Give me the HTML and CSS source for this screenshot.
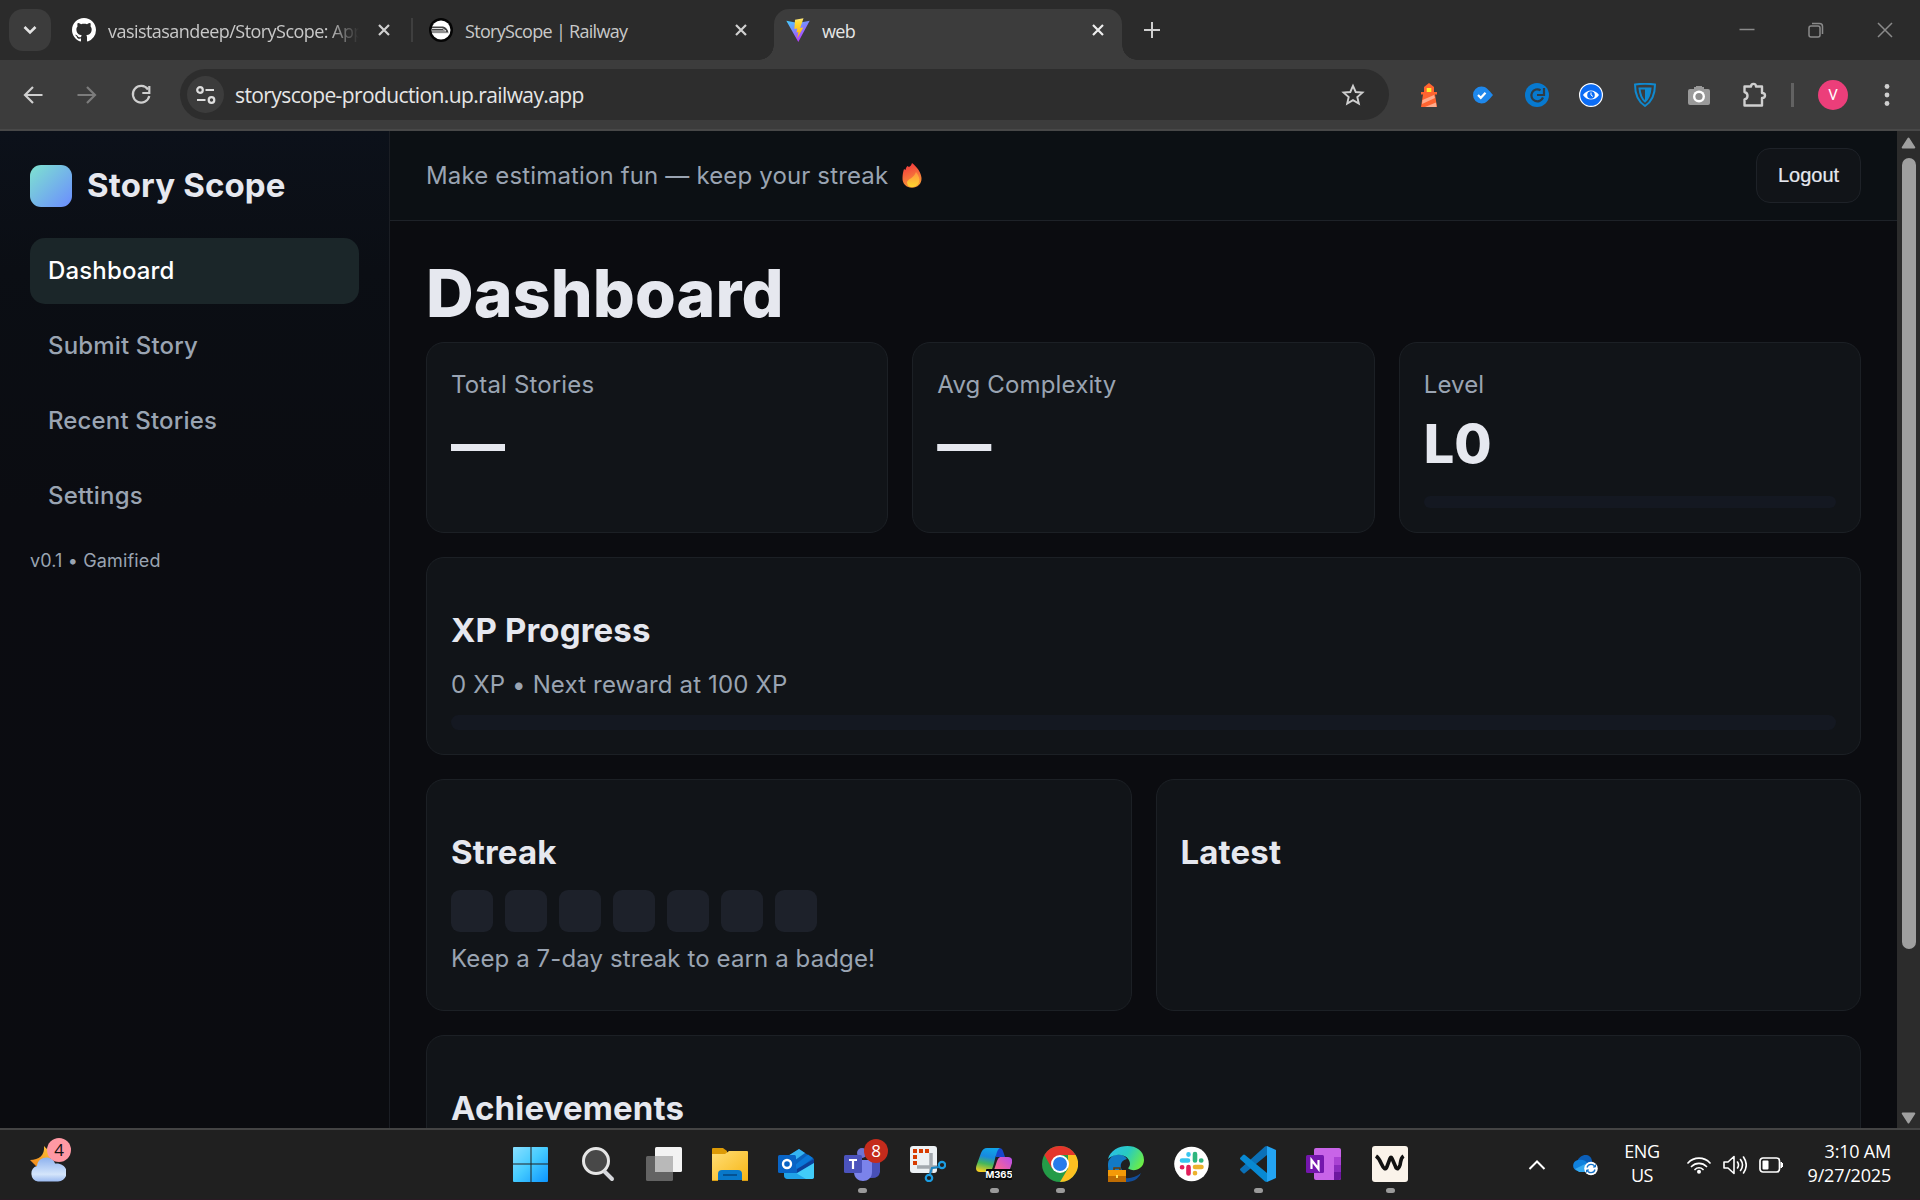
FILE: index.html
```html
<!DOCTYPE html>
<html lang="en">
<head>
<meta charset="utf-8">
<title>web</title>
<link rel="stylesheet" href="styles.css">
</head>
<body>
<div class="tabstrip">
  <div class="tab-search"><svg width="14" height="10" viewBox="0 0 14 10"><path d="M1.5 2l5.500 5.500L12.500 2" fill="none" stroke="#e3e3e3" stroke-width="2.600"/></svg></div>
  <div class="tab tab-one">
    <svg class="favicon" width="24" height="24" viewBox="0 0 16 16"><path fill="#fff" d="M8 0C3.580 0 0 3.580 0 8c0 3.540 2.290 6.530 5.470 7.590.4.070.55-.17.55-.38 0-.19-.01-.82-.01-1.490-2.010.37-2.530-.49-2.690-.94-.09-.23-.48-.94-.82-1.130-.28-.15-.68-.52-.01-.53.63-.01 1.080.58 1.230.82.72 1.210 1.870.87 2.330.66.07-.52.28-.87.51-1.070-1.780-.2-3.640-.89-3.640-3.950 0-.87.31-1.590.82-2.150-.08-.2-.36-1.020.08-2.120 0 0 .67-.21 2.200.82.64-.18 1.320-.27 2-.27s1.360.09 2 .27c1.530-1.040 2.200-.82 2.200-.82.44 1.100.16 1.920.08 2.120.51.56.82 1.270.82 2.150 0 3.070-1.870 3.750-3.650 3.950.29.25.54.73.54 1.480 0 1.070-.01 1.930-.01 2.200 0 .21.15.46.55.38A8.010 8.010 0 0016 8c0-4.420-3.580-8-8-8z"/></svg>
    <span class="tab-title faded">vasistasandeep/StoryScope: App</span>
    <svg class="close" width="12" height="12" viewBox="0 0 12 12"><path d="M1 1l10 10M11 1L1 11" stroke="#d0d0d0" stroke-width="2.200"/></svg>
  </div>
  <div class="tab-sep"></div>
  <div class="tab tab-two">
    <svg class="favicon" width="24" height="24" viewBox="0 0 24 24"><circle cx="12" cy="12" r="12" fill="#050505"/><circle cx="12" cy="12" r="9.500" fill="#fff"/><path d="M3 8.500h11c3 .5 5 3 5.500 6.500H2.800z" fill="#444"/><path d="M3 10.500h10.500l3.500 2.500H3M3 15h17" stroke="#ddd" stroke-width="1" fill="none"/></svg>
    <span class="tab-title">StoryScope | Railway</span>
    <svg class="close" width="12" height="12" viewBox="0 0 12 12"><path d="M1 1l10 10M11 1L1 11" stroke="#d0d0d0" stroke-width="2.200"/></svg>
  </div>
  <div class="tab tab-active">
    <svg class="favicon" width="24" height="24" viewBox="0 0 24 24"><defs><linearGradient id="va" x1="0" y1="0" x2=".6" y2="1"><stop offset="0" stop-color="#41d1ff"/><stop offset="1" stop-color="#bd34fe"/></linearGradient><linearGradient id="vb" x1="0" y1="0" x2="0" y2="1"><stop offset="0" stop-color="#ffea83"/><stop offset=".2" stop-color="#ffdd35"/><stop offset="1" stop-color="#ffa800"/></linearGradient></defs><path d="M.3 2.800L12 5l11.700-2.200L12.300 24z" fill="url(#va)"/><path d="M17.500.200L9 1.800 8.400 11l2.900-.6-.8 4.200 2-.6-1.300 6.500 6.100-11-3.100.6z" fill="url(#vb)"/></svg>
    <span class="tab-title">web</span>
    <svg class="close" width="12" height="12" viewBox="0 0 12 12"><path d="M1 1l10 10M11 1L1 11" stroke="#eee" stroke-width="2.200"/></svg>
  </div>
  <svg class="new-tab" width="16" height="16" viewBox="0 0 16 16"><path d="M8 0v16M0 8h16" stroke="#d0d0d0" stroke-width="2"/></svg>
  <div class="window-controls">
    <svg width="16" height="16" viewBox="0 0 16 16"><path d="M.5 7.500h15" stroke="#8a8a8a" stroke-width="1.500"/></svg>
    <svg width="16" height="16" viewBox="0 0 16 16"><rect x="1" y="4" width="11" height="11" rx="2" fill="none" stroke="#8a8a8a" stroke-width="1.500"/><path d="M4 1.500h7.500a3 3 0 013 3V12" fill="none" stroke="#8a8a8a" stroke-width="1.500"/></svg>
    <svg width="16" height="16" viewBox="0 0 16 16"><path d="M1 1l14 14M15 1L1 15" stroke="#8a8a8a" stroke-width="1.500"/></svg>
  </div>
</div>

<div class="toolbar">
  <div class="nav-buttons">
    <svg width="24" height="24" viewBox="0 0 24 24"><path d="M12 4l-8 8 8 8M4 12h17.500" fill="none" stroke="#cfcfcf" stroke-width="2.200"/></svg>
    <svg width="24" height="24" viewBox="0 0 24 24"><path d="M12 4l8 8-8 8M20 12H2.500" fill="none" stroke="#7c7c7c" stroke-width="2.200"/></svg>
    <svg width="24" height="24" viewBox="0 0 24 24"><path d="M19 6.500A8.300 8.300 0 1 0 20.300 13" fill="none" stroke="#cfcfcf" stroke-width="2.200"/><path d="M20.300 3v7h-7" fill="none" stroke="#cfcfcf" stroke-width="2.200"/></svg>
  </div>
  <div class="omnibox">
    <div class="site-info"><svg width="20" height="18" viewBox="0 0 20 18"><g fill="none" stroke="#dedede" stroke-width="2.200"><circle cx="4" cy="4" r="2.800"/><path d="M9.500 4H18M1 14h8.500"/><circle cx="15.500" cy="14" r="2.800"/></g></svg></div>
    <span class="url">storyscope-production.up.railway.app</span>
    <svg class="star" width="24" height="24" viewBox="0 0 24 24"><path d="M12 2.800l2.700 6.200 6.700.6-5.100 4.400 1.500 6.600L12 17.100l-5.800 3.500L7.700 14 2.600 9.600l6.700-.6z" fill="none" stroke="#cfcfcf" stroke-width="1.900"/></svg>
  </div>
  <div class="extensions">
    <svg width="24" height="24" viewBox="0 0 24 24"><path d="M12 0l5 4v5h3v2.500h-2L20 24H4l2-12.500H4V9h3V4z" fill="#ff6430"/><path d="M5.500 17L17 12l1 3-13 6zM8 24l11-4.500.5 4.500z" fill="#ffab8c"/><rect x="9.700" y="5" width="4.600" height="4" fill="#ffee2e"/></svg>
    <svg width="24" height="24" viewBox="0 0 24 24"><path d="M10.500 3.500c5 0 6.500 3 11.500 8.500-5 5.500-6.500 8.500-11.500 8.500a8.500 8.500 0 010-17z" fill="#1e88ec"/><path d="M7 12l2.800 2.800 4.700-5" fill="none" stroke="#fff" stroke-width="2.200"/></svg>
    <svg width="24" height="24" viewBox="0 0 24 24"><circle cx="12" cy="12" r="12" fill="#0779cf"/><path d="M19 5v7h-7M15.500 7.200a6 6 0 102.500 7.300" fill="none" stroke="#303b44" stroke-width="2.200"/></svg>
    <svg width="24" height="24" viewBox="0 0 24 24"><circle cx="12" cy="12" r="11.400" fill="#0b6cf5" stroke="#fff" stroke-width="1.200"/><path d="M4 12c4-6 12-6 16 0-4 6-12 6-16 0z" fill="#fff"/><circle cx="12" cy="12" r="3.800" fill="#0b6cf5"/><path d="M12 9.500V12l2 1.500" fill="none" stroke="#fff" stroke-width="1"/></svg>
    <svg width="24" height="24" viewBox="0 0 24 24"><path d="M2 1.500q10-1.500 20 0c0 9-3 17-10 21.500C5 18.500 2 10.500 2 1.500z" fill="none" stroke="#1089cf" stroke-width="2"/><path d="M6.500 5.500h11C17 11 15.500 15.500 12 18.500 8.500 15.500 7 11 6.500 5.500z" fill="none" stroke="#1089cf" stroke-width="2"/><path d="M12 5.500h5.500C17 11 15.500 15.500 12 18.500z" fill="#1089cf"/></svg>
    <svg width="24" height="24" viewBox="0 0 24 24"><path d="M3 6h4V4h2V3h6v1h2v2h4q2 0 2 2v12q0 2-2 2H3q-2 0-2-2V8q0-2 2-2z" fill="#9a9a9a"/><circle cx="12" cy="13.500" r="6" fill="#fff"/><circle cx="12" cy="13.500" r="3.600" fill="#8d8d8d"/></svg>
    <svg width="26" height="26" viewBox="0 0 26 26"><path d="M3.500 4.500h6.500C10 1 15 1 15 4.500h6v6.500c4 0 4 5 0 5v7.500H3.500v-6c4-1 4-6.500 0-7.500z" fill="none" stroke="#cfcfcf" stroke-width="2.400" stroke-linejoin="round"/></svg>
  </div>
  <div class="toolbar-sep"></div>
  <div class="avatar">V</div>
  <svg class="menu" width="6" height="28" viewBox="0 0 6 28"><g fill="#cfcfcf"><circle cx="3" cy="5.500" r="2.400"/><circle cx="3" cy="14" r="2.400"/><circle cx="3" cy="22.500" r="2.400"/></g></svg>
</div>

<div class="viewport">
  <aside class="sidebar">
    <div class="brand"><div class="logo"></div><span>Story Scope</span></div>
    <nav class="nav">
      <a class="nav-item active">Dashboard</a>
      <a class="nav-item">Submit Story</a>
      <a class="nav-item">Recent Stories</a>
      <a class="nav-item">Settings</a>
    </nav>
    <div class="version">v0.1 • Gamified</div>
  </aside>
  <main class="main">
    <header class="topbar">
      <div class="tagline">Make estimation fun — keep your streak
        <svg width="20" height="25" viewBox="0 0 20 25"><defs><linearGradient id="fl" x1=".3" y1="0" x2=".6" y2="1"><stop offset="0" stop-color="#f4363d"/><stop offset=".55" stop-color="#f5713b"/><stop offset="1" stop-color="#f99a35"/></linearGradient><linearGradient id="fi" x1="0" y1="0" x2="0" y2="1"><stop offset="0" stop-color="#ff9440"/><stop offset="1" stop-color="#ffd52e"/></linearGradient></defs><path d="M10 0c5 4 9 9 9.500 15 .3 6-4 9.700-9.500 9.700S.3 21 .5 15c.1-3 .5-6 1.500-9l1.500 1c.2-1.500 1-3 2-4L7 4C8.500 3 9.500 2 10 0z" fill="url(#fl)"/><path d="M14 9c3 4 4 7 3 10-1 3.500-4 5-7 5s-5-2-5-5c1-3 7-4 9-10z" fill="url(#fi)"/></svg>
      </div>
      <button class="logout">Logout</button>
    </header>
    <div class="content">
      <h1>Dashboard</h1>
      <div class="cards">
        <section class="card third"><p>Total Stories</p><div class="stat">—</div></section>
        <section class="card third"><p>Avg Complexity</p><div class="stat">—</div></section>
        <section class="card third"><p>Level</p><div class="stat">L0</div><div class="bar"></div></section>
        <section class="card full"><h3>XP Progress</h3><p>0 XP • Next reward at 100 XP</p><div class="bar thick"></div></section>
        <section class="card half"><h3>Streak</h3>
          <div class="days"><i></i><i></i><i></i><i></i><i></i><i></i><i></i></div>
          <p class="hint">Keep a 7-day streak to earn a badge!</p></section>
        <section class="card half"><h3>Latest</h3></section>
        <section class="card full"><h3>Achievements</h3></section>
      </div>
    </div>
  </main>
  <div class="scrollbar">
    <svg width="15" height="12" viewBox="0 0 15 12"><path d="M7.500 1.500l5.800 9H1.700z" fill="#a0a0a0" stroke="#a0a0a0" stroke-width="2" stroke-linejoin="round"/></svg>
    <div class="thumb"></div>
    <svg width="15" height="12" viewBox="0 0 15 12"><path d="M7.500 10.500l5.800-9H1.700z" fill="#a0a0a0" stroke="#a0a0a0" stroke-width="2" stroke-linejoin="round"/></svg>
  </div>
</div>

<div class="taskbar">
  <div class="weather">
    <svg width="36" height="36" viewBox="0 0 36 36"><defs><linearGradient id="mo" x1="0" y1="1" x2="1" y2="0"><stop offset="0" stop-color="#f08418"/><stop offset="1" stop-color="#ffc83c"/></linearGradient><linearGradient id="cl" x1="0" y1="0" x2="0" y2="1"><stop offset="0" stop-color="#8db1ee"/><stop offset=".7" stop-color="#d4e5fb"/><stop offset="1" stop-color="#9bbaf0"/></linearGradient></defs><path d="M14 0c5 5 10 10 4 20H6L0 14c9 0 15-5 14-14z" fill="url(#mo)"/><path d="M8 35.500a8 8 0 01-1-15.500C8 9 23 9 25 17.500c15-1 15 17 3 18z" fill="url(#cl)"/></svg>
    <span class="badge pink">4</span>
  </div>
  <div class="apps">
    <div class="app"><svg width="36" height="36" viewBox="1 0 36 36" overflow="visible"><defs><linearGradient id="wg" gradientUnits="userSpaceOnUse" x1="0" y1="0" x2="35" y2="35"><stop offset="0" stop-color="#8be0ff"/><stop offset=".5" stop-color="#45cbff"/><stop offset="1" stop-color="#0d96ff"/></linearGradient></defs><path fill="url(#wg)" d="M1 1h16.500v16.500H0V2q0-1 1-1zM18.500 1H34q1 0 1 1v15.500H18.500zM0 18.500h17.500V36H1q-1 0-1-1zM18.500 18.500H35V35q0 1-1 1H18.500z"/></svg></div>
    <div class="app"><svg width="36" height="36" viewBox="0 0 36 36"><circle cx="16" cy="15" r="12.500" fill="#484848" stroke="#e6e6e6" stroke-width="3"/><path d="M25 26l7 7" stroke="#d6d8dc" stroke-width="4" stroke-linecap="round"/></svg></div>
    <div class="app"><svg width="36" height="36" viewBox="0 0 36 36"><rect x="9" y="1" width="27" height="25" rx="1.500" fill="#f3f3f3"/><rect x="0" y="10" width="27" height="25" rx="1.500" fill="#636363"/><path d="M9 10h18v16H9z" fill="#b9b9b9"/></svg></div>
    <div class="app"><svg width="36" height="36" viewBox="0 0 36 36"><defs><linearGradient id="fo" x1="0" y1="0" x2="1" y2="1"><stop offset="0" stop-color="#ffde75"/><stop offset="1" stop-color="#f7b616"/></linearGradient></defs><path d="M0 3q0-1 1-1h10l4 3v5H0z" fill="#dc9a06"/><path d="M0 8h13l4-3h18q1 0 1 1v28H0z" fill="url(#fo)"/><path d="M6 34V28q0-4 4-4h16q4 0 4 4v6z" fill="#0878c9"/><path d="M11 29h14" stroke="#054f8c" stroke-width="1.800"/><path d="M0 34.500h6M30 34.500h6" stroke="#d69d16"/></svg></div>
    <div class="app"><svg width="36" height="36" viewBox="0 0 36 36"><path d="M6 13L21 3l15 10v18q0 2-3 2H10q-4 0-4-4z" fill="#0a62bd"/><path d="M8 11L21 3l6 4-14 10z" fill="#35b5f2"/><path d="M17 19L30 8.500l5 3.500L19 24z" fill="#0a78d8"/><path d="M36 13v4L19 27v-4z" fill="#0d3f98"/><path d="M36 17v14q0 2-3 2H9z" fill="#41ccf8"/><path d="M6 27h12l10 6H10q-4 0-4-4z" fill="#20a3e8"/><rect x="0" y="9" width="18" height="18" rx="1.500" fill="#0964c5"/><circle cx="9" cy="18" r="4" fill="none" stroke="#fff" stroke-width="2.400"/></svg></div>
    <div class="app"><svg width="36" height="36" viewBox="0 0 36 36"><circle cx="18" cy="7" r="5" fill="#6d74d4"/><path d="M24 15h12v11q-1 6-8 6h-4z" fill="#4850b8"/><path d="M10 14h18v12c0 12-18 12-18 0z" fill="#7b83eb"/><rect y="9" width="18" height="18" rx="1.500" fill="#4b53bc"/><path d="M5 14h8M9 14v9" stroke="#fff" stroke-width="2.200"/></svg><span class="badge red">8</span><b class="running"></b></div>
    <div class="app"><svg width="36" height="36" viewBox="0 0 36 36"><rect width="27" height="27" rx="3" fill="#edf1f4"/><path d="M5 19V5h14" fill="none" stroke="#d83b01" stroke-width="4" stroke-dasharray="4 2"/><path d="M21 7v20M7 21h20" stroke="#a3a9af" stroke-width="3.500"/><circle cx="32" cy="19" r="3.200" fill="none" stroke="#1b9de2" stroke-width="2.200"/><circle cx="19" cy="32" r="3.200" fill="none" stroke="#1b9de2" stroke-width="2.200"/><path d="M20 28l2-6 7-1" stroke="#1b85c4" stroke-width="2" fill="none"/></svg></div>
    <div class="app"><svg width="36" height="36" viewBox="0 0 36 36"><defs><linearGradient id="ma" x1=".5" y1="0" x2=".3" y2="1"><stop offset="0" stop-color="#11a3e8"/><stop offset=".35" stop-color="#1889df"/><stop offset=".65" stop-color="#45b65b"/><stop offset="1" stop-color="#f7cf20"/></linearGradient><linearGradient id="mb" x1="1" y1="0" x2="0" y2="1"><stop offset="0" stop-color="#b44df0"/><stop offset=".5" stop-color="#f2619d"/><stop offset="1" stop-color="#ffac56"/></linearGradient></defs><path d="M18 2h5q3 0 4 3l2 6h-9z" fill="#1746cd"/><path d="M11 2h13c-5 2-5 20-10 24H4c-4 0-5-3-3-8L5 7q2-5 6-5z" fill="url(#ma)"/><path d="M24 11h8q5 0 4 6l-4 12q-2 5-7 5H12q4-3 5-7l4-12q1-3 3-4z" fill="url(#mb)"/><rect x="10" y="23" width="26" height="11" rx="1" fill="#080808"/><text x="23" y="31.500" text-anchor="middle" class="m365">M365</text></svg><b class="running"></b></div>
    <div class="app"><svg width="36" height="36" viewBox="0 0 36 36"><circle cx="18" cy="18" r="18" fill="#249b48"/><path d="M2.400 9A18 18 0 0133.600 9H18L10 22.500z" fill="#e5352b"/><path d="M33.600 9A18 18 0 0118 36l8-13.500V9z" fill="#fcc021"/><circle cx="18" cy="18" r="9" fill="#fff"/><circle cx="18" cy="18" r="7" fill="#287bea"/></svg><b class="running"></b></div>
    <div class="app"><svg width="36" height="36" viewBox="0 0 36 36"><defs><linearGradient id="ed" x1="0" y1=".2" x2="1" y2=".6"><stop offset="0" stop-color="#2cbfe8"/><stop offset=".5" stop-color="#28cbc0"/><stop offset="1" stop-color="#6ced45"/></linearGradient></defs><path d="M12 30c6 4 15 2 21-3-3 7-9 9-15 9h-6z" fill="#124d98"/><path d="M0 20C-1 8 14 5 19 13c-5 1-7 5-6 9 1 3 3 5 5 6v8C6 36 0 30 0 20z" fill="#127ac5"/><path d="M0 13C4-4 36-5 36 14c0 9-10 12-15 9-2-1 1-2 1-5C22 9 9 5 0 13z" fill="url(#ed)"/><rect y="24" width="18" height="12" fill="#be6c03"/><path d="M0 24h18v6H0z" fill="#f49a08"/><path d="M6 24v-2h6v2" fill="none" stroke="#6b3c05" stroke-width="1.600"/><rect x="8" y="29" width="2" height="3" fill="#ffe45c"/></svg></div>
    <div class="app"><svg width="36" height="36" viewBox="0 0 36 36"><circle cx="17.500" cy="18" r="17.300" fill="#fff"/><g stroke-width="4.600" stroke-linecap="round"><path d="M8 14.500h6M14.500 8.400v.2" stroke="#36c5f0"/><path d="M21 8v6.500M27.300 14.500h-.2" stroke="#2eb67d"/><path d="M21 21h6.500M21 27.300v-.2" stroke="#ecb22e"/><path d="M14.500 21v6.500M8 21.200h.2" stroke="#e01e5a"/></g></svg></div>
    <div class="app"><svg width="36" height="36" viewBox="0 0 36 36"><path d="M27 0v9L5 27q-1 1-2 0l-2.500-2.500q-1-1 0-2L25 .5z" fill="#0b70b7"/><path d="M27 36v-9L5 9Q4 8 3 9L.5 11.500q-1 1 0 2L25 35.500z" fill="#0889d3"/><path d="M27 0l9 4v28l-9 4z" fill="#23a4f3"/></svg><b class="running"></b></div>
    <div class="app"><svg width="36" height="36" viewBox="0 0 36 36"><rect x="8" y="2" width="27" height="32" rx="2" fill="#c864e8"/><path d="M28 11h7v8h-7z" fill="#aa42d3"/><path d="M28 19h7v7h-7z" fill="#8b2bbd"/><path d="M28 26h7v6q0 2-2 2h-5z" fill="#6d179f"/><rect y="9" width="18" height="18" rx="1.500" fill="#7416ad"/><path d="M5.500 23v-9l7 9v-9" fill="none" stroke="#fff" stroke-width="2.200"/></svg></div>
    <div class="app"><svg width="36" height="36" viewBox="0 0 36 36"><rect width="36" height="36" rx="3" fill="#faf3ea"/><path d="M4 10c3 2 4 4.500 5.500 8 2 4.500 4 6.500 5.500 2.500l3-8c.7-1.700 1.300-1.700 2 0l3.500 8c1.500 4 3.500 2 4.500-1.500 1-4 .5-7 3.500-9" fill="none" stroke="#111" stroke-width="3.600"/></svg><b class="running"></b></div>
  </div>
  <div class="tray">
    <svg class="chevron" width="18" height="12" viewBox="0 0 18 12"><path d="M1.500 10L9 2.500l7.500 7.500" fill="none" stroke="#fff" stroke-width="2"/></svg>
    <svg class="onedrive" width="26" height="22" viewBox="0 0 26 22"><path d="M4 8C7-1 18-1 19 7l4 8H8z" fill="#0b5eb8"/><path d="M5 6c5-1 8 1 9 3l-6 8H5C-2 16-1 7 5 6z" fill="#1081dd"/><path d="M2 15l10-5 4 8H6z" fill="#35a9f0"/><circle cx="18" cy="14.500" r="6.800" fill="#fff"/><path d="M14 13.500a4.200 4.200 0 018-.5m0 2.500a4.200 4.200 0 01-8 .5" fill="none" stroke="#1472c8" stroke-width="1.300"/><path d="M22.500 10.500V13H20M13.500 18.500V16H16" fill="none" stroke="#1472c8" stroke-width="1"/></svg>
    <div class="lang">ENG<br>US</div>
    <svg class="wifi" width="24" height="18" viewBox="0 0 24 18"><g fill="none" stroke="#fff" stroke-width="1.700" stroke-linecap="round"><path d="M1 7a15 15 0 0122 0M4.500 10.500a10.500 10.500 0 0115 0M8 13.500a5.500 5.500 0 018 0"/></g><circle cx="12" cy="15.800" r="2" fill="#fff"/></svg>
    <svg class="sound" width="24" height="20" viewBox="0 0 24 20"><g fill="none" stroke="#fff" stroke-width="1.600" stroke-linecap="round" stroke-linejoin="round"><path d="M1 7h4l6-5.500v17L5 13H1z"/><path d="M14.500 7q2 3 0 6M17.500 4.500q4 5.500 0 11M20.500 2q5.500 8 0 16"/></g></svg>
    <svg class="battery" width="24" height="16" viewBox="0 0 24 16"><rect x="1" y="1" width="19.500" height="14" rx="3" fill="none" stroke="#fff" stroke-width="1.700"/><rect x="3.500" y="3.500" width="6" height="9" rx="1" fill="#fff"/><path d="M22 5v6l2-2V7z" fill="#fff" stroke="#fff"/></svg>
    <div class="clock">3:10 AM<br>9/27/2025</div>
  </div>
</div>
</body>
</html>
```
FILE: styles.css
```css
* { box-sizing: border-box; }
body { margin: 0; width: 1920px; height: 1200px; overflow: hidden; display: flex; flex-direction: column; background: #0b0c10; font-family: "Open Sans", "Noto Sans", sans-serif; }
svg { display: block; flex: none; }

/* Browser tab strip */
.tabstrip { height: 60px; flex: none; background: #2b2b2b; display: flex; align-items: center; padding-left: 9px; }
.tab-search { width: 42px; height: 42px; border-radius: 14px; background: #3c3c3c; display: grid; place-items: center; }
.tab { display: flex; align-items: center; flex: none; }
.tab-title { font-size: 18px; line-height: 24px; padding-top: 2px; margin-left: 12px; flex: 1; white-space: nowrap; overflow: hidden; color: #c9c9c9; letter-spacing: -0.7px; }
.faded { flex: none; width: 251px; letter-spacing: -0.55px; -webkit-mask-image: linear-gradient(90deg, #000 220px, transparent 251px); mask-image: linear-gradient(90deg, #000 220px, transparent 251px); }
.tab-one { width: 319px; margin-left: 21px; }
.tab-one .close { margin-left: 19px; }
.tab-sep { width: 2px; height: 24px; margin-left: 20px; background: #3f3f3f; }
.tab-two { width: 318px; margin-left: 16px; }
.tab-active { position: relative; width: 348px; height: 51px; margin: 9px 0 0 27px; padding: 0 18px 9px 12px; border-radius: 15px 15px 0 0; background: #3c3c3c; }
.tab-active::before, .tab-active::after { content: ""; position: absolute; bottom: 0; width: 15px; height: 15px; }
.tab-active::before { left: -15px; background: radial-gradient(circle at 0 0, transparent 14.500px, #3c3c3c 15px); }
.tab-active::after { right: -15px; background: radial-gradient(circle at 100% 0, transparent 14.500px, #3c3c3c 15px); }
.tab-active .tab-title { color: #e6e6e6; }
.new-tab { margin-left: 22px; }
.window-controls { display: flex; gap: 53px; margin-left: auto; padding-right: 27px; }

/* Browser toolbar */
.toolbar { height: 71px; flex: none; display: flex; align-items: center; border-bottom: 2px solid #484848; background: #3c3c3c; }
.nav-buttons { display: flex; gap: 30px; padding-left: 21px; width: 180px; flex: none; }
.omnibox { width: 1209px; height: 51px; flex: none; border-radius: 26px; background: #2d2d2d; display: flex; align-items: center; padding: 0 24px 0 7px; }
.site-info { width: 37px; height: 37px; border-radius: 50%; background: #3c3c3c; display: grid; place-items: center; }
.url { flex: 1; margin-left: 11px; font-size: 21px; color: #e6e6e6; letter-spacing: -0.6px; }
.extensions { display: flex; align-items: center; gap: 30px; margin-left: 28px; }
.toolbar-sep { width: 3px; height: 24px; margin-left: 24px; background: #626262; }
.avatar { width: 30px; height: 30px; margin-left: 24px; border-radius: 50%; background: #ec3e7a; color: #fff; font: 15px/30px Roboto, sans-serif; text-align: center; }
.menu { margin-left: 36px; }

/* Application */
.viewport { flex: 1; min-height: 0; overflow: hidden; display: flex; font-family: Inter, sans-serif; font-size: 24px; line-height: 36px; letter-spacing: 0.15px; color: #e6e8ef; }
.sidebar { width: 390px; flex: none; padding: 30px; border-right: 1px solid #1b1e24; background: linear-gradient(180deg, #0c111a 0, #0b0e14 140px, #0b0c11 380px, #0b0c10 100%); }
.brand { display: flex; align-items: center; gap: 15px; height: 50px; font-size: 33px; font-weight: 700; }
.brand span { padding-bottom: 2px; }
.logo { width: 42px; height: 42px; border-radius: 11px; background: linear-gradient(135deg, #7ee3cf, #6b8cff); }
.nav { display: flex; flex-direction: column; gap: 9px; width: 329px; margin-top: 27px; }
.nav-item { height: 66px; padding: 15px 18px; border-radius: 15px; font-weight: 500; color: #9aa4b2; }
.nav-item.active { background: #1b2629; color: #fff; }
.version { margin-top: 18px; font-size: 18px; line-height: 27px; color: #9aa4b2; }
.main { flex: 1; min-width: 0; }
.topbar { height: 90px; display: flex; align-items: center; justify-content: space-between; padding: 0 36px; border-bottom: 1px solid #1e2228; background: #0c1014; }
.tagline { display: flex; gap: 14px; color: #9aa4b2; }
.tagline svg { margin-top: 5px; }
.logout { width: 105px; height: 55px; padding: 0; border: 1px solid #1e2228; border-radius: 14px; background: #111418; color: #e6e8ef; font: 500 20px "Liberation Sans", sans-serif; -webkit-text-stroke: 0.2px #e6e8ef; }
.content { padding: 36px 36px 0; }
h1 { margin: 0 0 12px; font-size: 66px; line-height: 72.600px; font-weight: 800; letter-spacing: 0.1px; }
.cards { display: grid; grid-template-columns: repeat(6, 1fr); gap: 24px; }
.card { padding: 24px; border: 1px solid #1c2025; border-radius: 18px; background: #111418; }
.third { grid-column: span 2; height: 191px; }
.half { grid-column: span 3; height: 232px; }
.full { grid-column: span 6; height: 198px; }
.card p { margin: 0; color: #9aa4b2; }
.stat { font-size: 54px; line-height: 81px; font-weight: 800; }
.card h3 { margin: 23px 0 12px; font-size: 33px; line-height: 50px; font-weight: 700; }
.bar { height: 12px; margin-top: 12px; border-radius: 8px; background: #141821; }
.bar.thick { height: 15px; }
.days { display: flex; gap: 12px; padding-top: 1px; }
.days i { width: 42px; height: 42px; border-radius: 9px; background: #1d212a; }
.card .hint { margin-top: 9px; letter-spacing: 0.11px; }
.scrollbar { width: 23px; flex: none; display: flex; flex-direction: column; align-items: center; padding: 6px 0 4px; background: #2c2c2c; }
.thumb { width: 14px; height: 791px; margin: 9px 0 auto; border-radius: 7px; background: #9f9f9f; }

/* Taskbar */
.taskbar { height: 72px; flex: none; display: flex; align-items: flex-start; border-top: 2px solid #444; border-bottom: 1px solid #2a1a24; background: #202020; color: #fff; }
.weather { position: relative; width: 36px; margin: 16px 0 0 30px; }
.badge { position: absolute; width: 24px; height: 24px; border-radius: 50%; font-size: 17px; line-height: 24px; text-align: center; }
.pink { left: 17px; top: -8px; background: #ff99a4; color: #111; }
.red { left: 20px; top: -7px; background: #c42b1c; }
.apps { display: flex; gap: 30px; margin: 16px 0 0 448px; }
.app { position: relative; width: 36px; height: 36px; }
.running { position: absolute; left: 13.500px; top: 42px; width: 9px; height: 5px; border-radius: 3px; background: #9a9a9a; }
.m365 { font: 700 9.500px Inter, sans-serif; fill: #fff; }
.tray { display: flex; align-items: center; height: 69px; margin-left: auto; padding-right: 29px; font-size: 18px; line-height: 24px; letter-spacing: -0.4px; }
.onedrive { margin-left: 27px; }
.lang { width: 50px; margin-left: 18px; padding-bottom: 3px; text-align: center; }
.wifi { margin-left: 20px; }
.sound, .battery { margin-left: 12px; }
.clock { width: 90px; margin-left: 18px; padding-bottom: 3px; letter-spacing: -0.2px; text-align: right; white-space: nowrap; }
```
